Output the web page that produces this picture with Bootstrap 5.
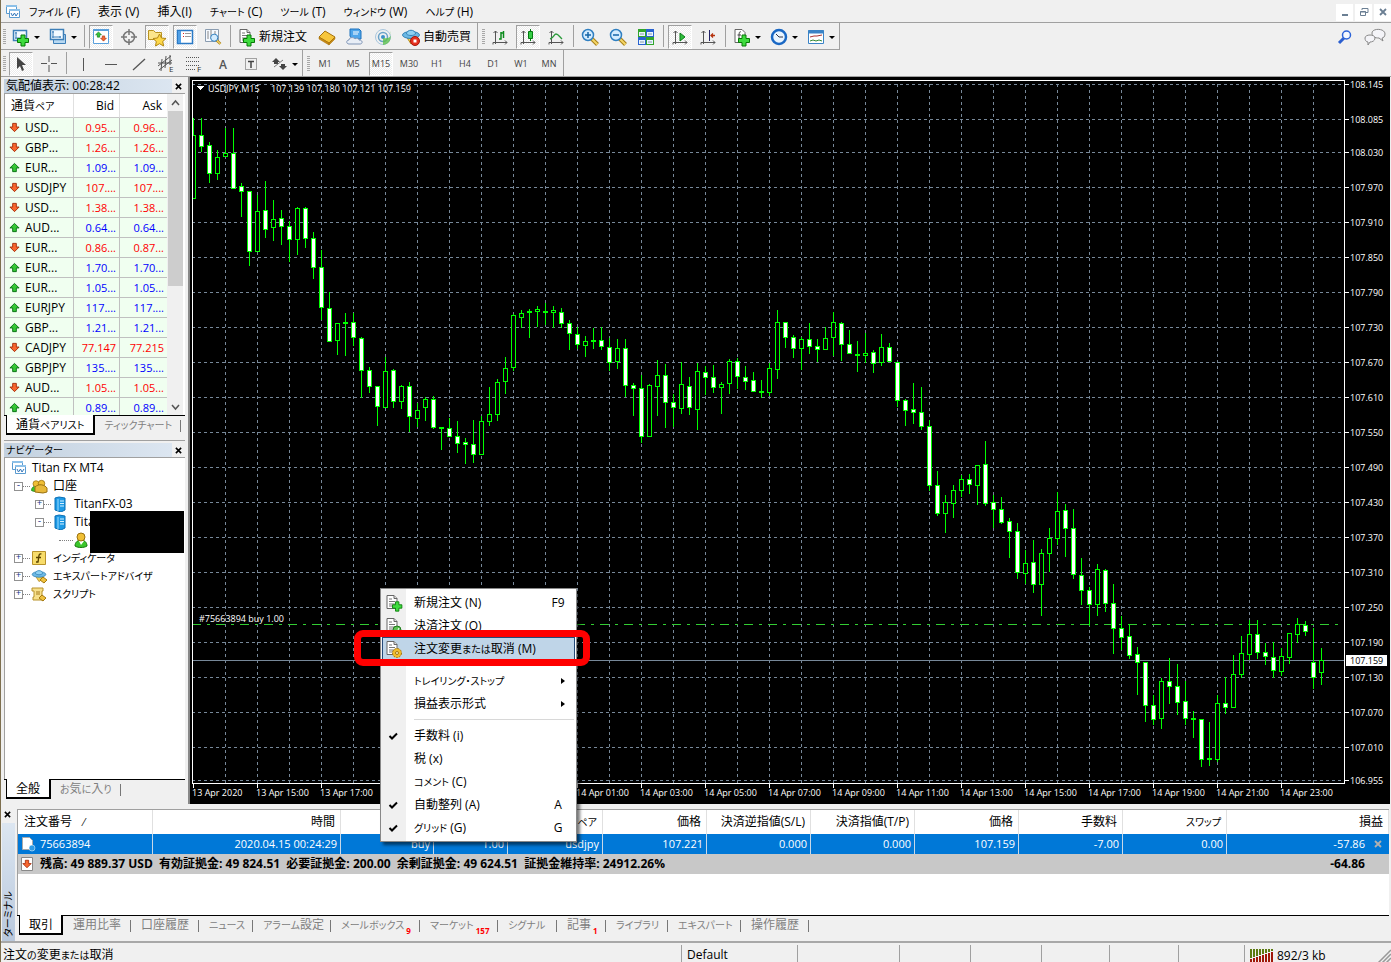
<!DOCTYPE html>
<html lang="ja">
<head>
<meta charset="utf-8">
<meta name="viewport" content="width=device-width, initial-scale=1">
<title>Titan FX MT4</title>
<link href="https://cdn.jsdelivr.net/npm/bootstrap@5.3.0/dist/css/bootstrap.min.css" rel="stylesheet">
<style>
body{height:100vh;overflow:hidden;background:#f0f0f0;color:#000;font:12px/18px "Open Sans","Noto Sans CJK JP",sans-serif;font-feature-settings:"palt";border-left:1px solid #7d6f4f}
button,input{font:inherit;color:inherit}
button{background:none;border:0;padding:0}
svg{display:block;flex:none}
.kn{font-size:10px}
.menubar{height:23px;border-bottom:1px solid #a0a0a0;padding:2px 0 0 4px;gap:18px}
.menubar .appicon{margin-right:-10px}
.winbtn{width:17px;height:17px;background:#fff;margin-left:2px;display:grid;place-items:center}
.tools{height:27px}
.band{border-right:1px solid #a0a0a0;border-bottom:1px solid #a0a0a0;height:27px;padding-top:2px}
.tools.second{border-bottom:1px solid #a0a0a0}
.tools.second .band{border-bottom:0;height:26px}
.grip{width:3px;margin:4px 1px 4px 2px;background:repeating-linear-gradient(#a8a8a8 0 1px,#f0f0f0 1px 2px)}
.band+.band .grip{margin-left:4px}
.tb{width:28px;display:flex;align-items:center;justify-content:center;font-size:9px;color:#444}
.tb.wide{width:auto;padding:0 6px 0 4px;gap:2px;font-size:12px;color:#000}
.tb.drop{width:37px;gap:3px;padding-left:4px;justify-content:flex-start}
.tb.on{width:24px;margin:0 2px;background:repeating-conic-gradient(#fff 0 25%,#ececec 0 50%) 0 0/2px 2px;border:1px solid #fff;border-top-color:#a0a0a0;border-left-color:#a0a0a0}
.drop::after{content:"";border:3px solid transparent;border-top-color:#000;border-bottom:0}
.vsep{width:1px;background:#a0a0a0;margin:0 2px 2px 3px}
.side{width:189px;border-right:2px solid #888;padding:2px 3px 0 3px}
.market{height:361px;flex:none}
.navi{border-top:1px solid #a0a0a0;padding-top:2px}
.ptitle{height:14px;line-height:14px;padding-right:2px}
.ptitle>span{background:linear-gradient(90deg,#c3d1df,#dce6f1);width:168px;padding-left:2px}
.closex{font-weight:700;width:10px;height:10px;display:grid;place-items:center}
.sheet{background:#fff;border-top:1px solid #a0a0a0;border-left:1px solid #a0a0a0}
.quotes{table-layout:fixed;width:162px;border-collapse:separate;border-spacing:0}
.quotes th{height:24px;font-weight:400;padding:0 5px 0 6px;border-bottom:1px solid #c8c8c8;border-right:1px solid #e0e0e0}
.quotes td{height:20px;line-height:19px;padding:0 3px 0 0;background:#f0fff0;border-bottom:1px solid #c0c0c0;border-right:1px solid #c0c0c0;white-space:nowrap}
.quotes td+td{font-size:11px;text-align:right}
.quotes td svg{margin:0 5px 0 4px}
.quotes th:last-child,.quotes td:last-child{border-right:0}
.up td+td{color:#00f}.down td+td{color:#f00}
.sbar{width:16px;background:#f0f0f0}
.thumb{height:175px;background:#cdcdcd;width:15px}
.tabline{border-top:1px solid #000;height:25px;color:#808080}
.tabline button{height:18px;line-height:18px;padding:0 9px;white-space:nowrap;position:relative}
.tabline button:not(.cur)::after{content:"";position:absolute;right:0;top:4px;height:12px;border-right:1px solid #777}
.tabline .cur{background:#fff;color:#000;height:20px;line-height:20px;margin-top:-1px;margin-left:2px;border:1px solid #000;border-width:0 2px 2px 1px}
.tree{margin:0;padding:1px 0 0 6px;list-style:none}
.tree li{height:18px;display:flex;align-items:center;white-space:nowrap}
.tree svg{margin-right:5px}
.lv1{padding-left:3px}.lv2{padding-left:24px}.lv3{padding-left:48px}
.pm{width:9px;height:9px;border:1px solid #919191;background:#fff;display:grid;place-items:center;font:9px/7px "Liberation Mono",monospace;color:#1c3c8c}
.dots{width:7px;border-top:1px dotted #808080}
.dots.long{width:14px}
.redact{position:absolute;left:89px;top:434px;width:94px;height:42px;background:#000}
.chart{background:#000;margin-right:1px;min-width:0}
.chart text{font:9px "Open Sans",sans-serif;fill:#fff}
.terminal{height:137px;padding:5px 2px 0 1px}
.tstrip{width:15px;flex:none}
.tname{background:linear-gradient(#b9c8dc,#dce6f1);writing-mode:vertical-rl;text-orientation:sideways;transform:rotate(180deg);line-height:13px;width:13px;padding-top:4px}
.orders{table-layout:fixed;width:100%;border-collapse:separate;border-spacing:0;white-space:nowrap}
.orders th{height:24px;font-weight:400;text-align:right;padding:0 5px 0 0;border-right:1px solid #e0e0e0}
.orders th:first-child{text-align:left;padding-left:6px}
.orders td{height:20px;line-height:18px;padding:0 3px 1px 0;text-align:right;border-right:1px solid #c8d8e8;background:#0078d7;color:#fff;font-size:11px}
.orders .sum td{background:#c8c8c8;color:#000;font-weight:700;font-size:12px;border:0}
.orders td:first-child{text-align:left;padding-left:3px}
.orders td:last-child{padding-right:24px;position:relative;border:0}
.orders td:last-child button{position:absolute;right:7px;top:6px}
.ttabs{display:grid;grid-template-columns:46px 68px 68px 54px 78px 89px 78px 59px 49px 62px 73px 68px;justify-content:start;align-items:start;height:26px}
.ttabs button{padding:0 0 0 10px;text-align:left}
.ttabs .cur{padding-left:9px;margin-right:0}
.cnt{color:#f00;font-size:8px;font-weight:700;position:relative;top:5px;margin-left:2px}
.status{height:21px;border-top:2px solid #a8a8a8;display:grid;grid-template-columns:1fr 116px 102px 71px 71px 68px 69px 66px 147px;line-height:20px}
.status div{padding:1px 0 0 5px;margin-top:2px;line-height:17px;border-left:1px solid #a0a0a0;white-space:nowrap}
.status div:first-child{border:0;padding-left:2px}
.ctx{display:block;position:absolute;left:379px;top:588px;width:197px;min-width:0;padding:2px 1px;border:1px solid #888;border-radius:0;background:linear-gradient(90deg,#f0f0f0 25px,#fff 25px);box-shadow:3px 3px 3px #0008;font-size:12px;color:#000}
.ctx button{display:flex;align-items:center;width:100%;height:23px;text-align:left;padding:0 8px 0 0;border:1px solid transparent}
.ctx i{width:31px;padding-left:1px;display:flex}
.ctx button>span{flex:1}
.ctx kbd{background:none;color:#000;font:inherit;padding:0;width:16px;text-align:center}
.ctx .hot{background:#bfd5e8;border-color:#244a78}
.ctx hr{margin:4px 1px 4px 32px;height:1px;border:0;background:#d8d8d8;opacity:1}
.ring{position:absolute;z-index:1001;left:353px;top:630px;width:236px;height:36px;border:7px solid #f00;border-radius:9px;pointer-events:none}
</style>
</head>
<body class="d-flex flex-column position-relative">
<svg width="0" height="0" class="position-absolute">
 <symbol id="doc" viewBox="0 0 20 20"><path d="M3 2.500h7l3 3v10H3z" fill="#fff" stroke="#666"/><path d="M10 2.500v3h3" fill="#ddd" stroke="#666"/><path d="M5 6h3M5 8.500h6M5 11h6M5 13h4" stroke="#777"/></symbol>
 <symbol id="plus" viewBox="0 0 20 20"><path d="M10 8h4v3.500h3.500v4H14V19h-4v-3.500H6.500v-4H10z" fill="#3edb3e" stroke="#067806"/></symbol>
 <symbol id="win" viewBox="0 0 20 20"><path d="M2.500 3.500h13v10h-13z" fill="#f4faff" stroke="#3d7fb8" stroke-width="1.500"/><path d="M5 5v7M4 6h2M4 11h9M12 10v2" stroke="#3d7fb8" fill="none"/></symbol>
 <symbol id="app" viewBox="0 0 16 16"><path d="M1.500 1.500h10v8h-10z" fill="#fff" stroke="#5a9bd0"/><path d="M1 1h11v2H1z" fill="#8cc0e8"/><path d="M4.500 5.500h10v8h-10z" fill="#fff" stroke="#5a9bd0"/><path d="M4 5h11v2H4z" fill="#8cc0e8"/><path d="M6 9l1.500 3 2-3 1.500 3 2-3" fill="none" stroke="#3377bb"/></symbol>
 <symbol id="aup" viewBox="0 0 12 12"><path d="M6 1.500l5 5H8v4H4v-4H1z" fill="#35c735" stroke="#056c13"/></symbol>
 <symbol id="adn" viewBox="0 0 12 12"><path d="M6 10.500l5-5H8v-4H4v4H1z" fill="#f8672f" stroke="#a32a08"/></symbol>
 <symbol id="axes" viewBox="0 0 20 20"><path d="M5.500 4v13M3 15.500h14M3.500 6l2-2 2 2M15 13.500l2 2-2 2M3 15.500v2" fill="none" stroke="#555"/></symbol>
 <symbol id="lens" viewBox="0 0 20 20"><path d="M11.500 11.500l6 6" stroke="#a8801a" stroke-width="4"/><path d="M11.500 11.500l6 6" stroke="#f5d667" stroke-width="2"/><circle cx="8" cy="8" r="5.500" fill="#d4ecff" stroke="#2f7fc1" stroke-width="1.500"/></symbol>
 <symbol id="hat" viewBox="0 0 20 20"><path d="M5 9l5 8 6-5z" fill="#f3cf57" stroke="#b58a1c"/><ellipse cx="10" cy="8" rx="8.500" ry="3.500" fill="#6cb8e4" stroke="#3484b8"/><path d="M5.500 7c0-5 9-5 9 0-2 2-7 2-9 0z" fill="#8fd0f2" stroke="#3484b8"/></symbol>
 <symbol id="man" viewBox="0 0 16 16"><path d="M2 14c0-8 12-8 12 0-3 2-9 2-12 0z" fill="#3bc62c" stroke="#16780d"/><path d="M6 9l2 4 3-4z" fill="#fff"/><circle cx="8" cy="5" r="4" fill="#f0bf35" stroke="#9a7110"/></symbol>
 <symbol id="server" viewBox="0 0 14 16"><path d="M2 2l4-1 6 1v12l-4 2-6-2z" fill="#1d9ae6" stroke="#0a6fb5"/><path d="M5 3v12" stroke="#9cdcff"/><path d="M7 5h4M7 7.500h4M7 10h4" stroke="#d6f1ff"/></symbol>
 <symbol id="tick" viewBox="0 0 10 10"><path d="M1.500 5L4 7.500 9 2.500" fill="none" stroke="#000" stroke-width="2"/></symbol>
 <symbol id="xx" viewBox="0 0 8 8"><path d="M1 1l6 6M7 1L1 7" stroke="currentColor" stroke-width="1.800"/></symbol>
</svg>

<nav class="menubar d-flex align-items-center" aria-label="メニュー">
 <svg class="appicon" width="16" height="16"><use href="#app"/></svg>
 <button><span class="kn">ファイル</span> (F)</button><button>表示 (V)</button><button>挿入(I)</button><button><span class="kn">チャート</span> (C)</button><button><span class="kn">ツール</span> (T)</button><button><span class="kn">ウィンドウ</span> (W)</button><button><span class="kn">ヘルプ</span> (H)</button>
 <div class="d-flex ms-auto">
  <button class="winbtn" aria-label="最小化"><svg width="10" height="10"><path d="M2 8h6" stroke="#6b7f93" stroke-width="2"/></svg></button>
  <button class="winbtn" aria-label="元に戻す"><svg width="10" height="10" fill="none" stroke="#6b7f93"><path d="M3 3V1.500h6v4H7M3 1.500h6"/><path d="M1.500 4.500h5v4h-5zM1 5h6"/></svg></button>
  <button class="winbtn" aria-label="閉じる"><svg width="8" height="8" color="#6b7f93"><use href="#xx"/></svg></button>
 </div>
</nav>

<div class="tools d-flex">
 <div class="band d-flex"><div class="grip"></div>
  <button class="tb drop" aria-label="新規チャート"><svg width="20" height="20"><use href="#win"/><use href="#plus"/></svg></button>
  <button class="tb drop" aria-label="プロファイル"><svg width="20" height="20"><path d="M5.500 7.500h12v9h-12z" fill="#b9d9f2" stroke="#3d7fb8"/><use href="#win" y="-1"/></svg></button>
  <div class="vsep"></div>
  <button class="tb on" aria-label="気配値表示"><svg width="20" height="20"><path d="M2.500 2.500h15v14h-15z" fill="#fff" stroke="#5aa0dc"/><path d="M2 3h16" stroke="#5aa0dc" stroke-width="2"/><use href="#aup" x="4" y="4" width="7" height="7"/><use href="#adn" x="9" y="8" width="7" height="7"/></svg></button>
  <button class="tb" aria-label="データウィンドウ"><svg width="20" height="20" fill="none" stroke="#777" stroke-width="1.500"><circle cx="10" cy="10" r="5.500"/><path d="M10 2v6M10 12v6M2 10h6M12 10h6"/></svg></button>
  <button class="tb on" aria-label="ナビゲーター"><svg width="20" height="20"><path d="M1.500 3.500h5l2 2h6v7h-13z" fill="#fbe58c" stroke="#b9931f"/><path d="M12.500 7l2 4 4.500.5-3.300 3 1 4.500-4.200-2.300L8.500 19l.8-4.500-3.300-3 4.500-.5z" fill="#fdd84b" stroke="#b38710"/></svg></button>
  <button class="tb on" aria-label="ターミナル"><svg width="20" height="20"><path d="M2.500 3.500h15v13h-15z" fill="#fff" stroke="#2a7ac6" stroke-width="1.500"/><path d="M3 4h3v12H3z" fill="#4f9fe6"/><path d="M8 6.500h1M8 9.500h1" stroke="#d22"/><path d="M10 6.500h6M10 9.500h6" stroke="#999"/></svg></button>
  <button class="tb" aria-label="ストラテジーテスター"><svg width="20" height="20"><path d="M2.500 2.500h13v12h-13z" fill="#f5f9ff" stroke="#8a9cb0"/><path d="M5 4v8M8 3v9M12 4v8" stroke="#888"/><use href="#lens" x="6" y="5" width="13" height="14"/></svg></button>
  <div class="vsep"></div>
  <button class="tb wide"><svg width="20" height="20"><use href="#doc"/><use href="#plus"/></svg>新規注文</button>
  <button class="tb" aria-label="メタエディター"><svg width="20" height="20"><path d="M2 10l6-6 10 6-6 6z" fill="#f7c63c" stroke="#a5720d"/><path d="M2 10v2l10 6v-2zM12 16l6-6v2l-6 6z" fill="#c98a13" stroke="#a5720d" stroke-width=".5"/></svg></button>
  <button class="tb" aria-label="クラウド"><svg width="20" height="20"><path d="M5 2h9l2 2v8H7L5 9z" fill="#4ea5ea" stroke="#1f73bd"/><path d="M8 5h6M8 7h5" stroke="#fff"/><path d="M4 17c-3 0-3-4 0-4 0-3 5-3 6-1 2-2 4 0 4 1 4 0 4 4 1 4z" fill="#e8eef6" stroke="#7f94b5"/></svg></button>
  <button class="tb" aria-label="シグナル"><svg width="20" height="20" fill="none"><circle cx="10" cy="10" r="7.500" stroke="#a8c6dd"/><circle cx="10" cy="10" r="4.500" stroke="#6aa2c8" stroke-width="1.500"/><circle cx="10" cy="10" r="2" fill="#3b8fc9"/><path d="M10 18V11l1 0c6 1 8-2 6-7 2 8 0 13-7 14z" fill="#5cc04c" fill-opacity=".8"/></svg></button>
  <button class="tb wide"><svg width="20" height="20"><use href="#hat"/><circle cx="14" cy="14" r="4.500" fill="#e6301f" stroke="#a5150a"/><path d="M12.500 12.500h3v3h-3z" fill="#fff"/></svg>自動売買</button>
 </div>
 <div class="band d-flex"><div class="grip"></div>
  <button class="tb" aria-label="バーチャート"><svg width="20" height="20"><use href="#axes"/><path d="M9 12h2V5M13 6h-2M13.500 4v7" stroke="#0a8a1a" stroke-width="1.500" fill="none"/></svg></button>
  <button class="tb on" aria-label="ローソク足"><svg width="20" height="20"><use href="#axes"/><path d="M12.500 2v12" stroke="#067a12"/><path d="M10.500 4.500h4v7h-4z" fill="#36cf46" stroke="#067a12"/></svg></button>
  <button class="tb" aria-label="ラインチャート"><svg width="20" height="20"><use href="#axes"/><path d="M4 12c4-1 4-5 6-5s3 2 6 5" stroke="#2a9a3a" fill="none" stroke-width="1.300"/></svg></button>
  <div class="vsep"></div>
  <button class="tb" aria-label="拡大"><svg width="20" height="20"><use href="#lens"/><path d="M5 8h6M8 5v6" stroke="#1565a8" stroke-width="1.500"/></svg></button>
  <button class="tb" aria-label="縮小"><svg width="20" height="20"><use href="#lens"/><path d="M5 8h6" stroke="#1565a8" stroke-width="1.500"/></svg></button>
  <button class="tb" aria-label="整列"><svg width="20" height="20"><path d="M2 2h8v8H2z" fill="#31a52b"/><path d="M10 2h8v8h-8z" fill="#2862d0"/><path d="M2 10h8v8H2z" fill="#2862d0"/><path d="M10 10h8v8h-8z" fill="#31a52b"/><path d="M3 5h6v4H3zM11 5h6v4h-6zM3 13h6v4H3zM11 13h6v4h-6z" fill="#e8f4ff"/><path d="M4 7h4M12 7h4M4 15h4M12 15h4" stroke="#89a"/></svg></button>
  <div class="vsep"></div>
  <button class="tb on" aria-label="自動スクロール"><svg width="20" height="20"><use href="#axes"/><path d="M10 6l5 4-5 4z" fill="#2fbf3c" stroke="#0b7a17"/></svg></button>
  <button class="tb" aria-label="チャートシフト"><svg width="20" height="20"><use href="#axes"/><path d="M11.500 3v11" stroke="#226"/><path d="M17 8.500h-4M15 6.500l-2 2 2 2" stroke="#b5320d" stroke-width="1.300" fill="none"/></svg></button>
  <div class="vsep"></div>
  <button class="tb drop" aria-label="インディケータ"><svg width="20" height="20"><path d="M3 2.500h7l3 3v10H3z" fill="#fff" stroke="#666"/><path d="M9 5c-2-1-2 1-2 8M5.500 8h3.500" fill="none" stroke="#444"/><use href="#plus"/></svg></button>
  <button class="tb drop" aria-label="時間足"><svg width="20" height="20"><circle cx="10" cy="10" r="7" fill="#eaf5ff" stroke="#1a68c4" stroke-width="2.500"/><path d="M7 7l3 3h4" fill="none" stroke="#334"/></svg></button>
  <button class="tb drop" aria-label="定型チャート"><svg width="20" height="20"><path d="M2.500 3.500h15v13h-15z" fill="#fff" stroke="#3a83c6"/><path d="M2 5h16" stroke="#3a83c6" stroke-width="3"/><path d="M4 10l4-1 3 0 5-1" stroke="#a33" fill="none"/><path d="M4 14l3-1 3 1 3-1 3 1" stroke="#383" fill="none"/></svg></button>
 </div>
 <div class="d-flex align-items-center ms-auto gap-1 pe-1">
  <button class="tb" aria-label="検索"><svg width="16" height="16"><path d="M7 9l-5 5" stroke="#2b5fd0" stroke-width="3"/><circle cx="9.500" cy="6" r="4" fill="#f4f8ff" stroke="#2b62d8" stroke-width="1.500"/></svg></button>
  <button aria-label="チャット"><svg width="24" height="18" fill="#f4f4f8" stroke="#888"><path d="M9 5c0-5 13-5 13 1 0 3-2 4-3 4l1 3-4-3c-4 0-7-1-7-5z"/><path d="M2 10c0-4 10-4 10 0 0 3-3 4-5 4l-2 3v-3c-2 0-3-2-3-4z"/></svg></button>
 </div>
</div>
<div class="tools second d-flex">
 <div class="band d-flex"><div class="grip"></div>
  <button class="tb on" aria-label="カーソル"><svg width="16" height="18"><path d="M4 2v12l3-3 2 5 2-1-2-5h4z" fill="#444"/></svg></button>
  <button class="tb" aria-label="十字カーソル"><svg width="18" height="18"><path d="M9 1v6M9 10v7M1 8.500h6M11 8.500h6" stroke="#555"/></svg></button>
  <div class="vsep"></div>
  <button class="tb" aria-label="垂直線"><svg width="16" height="16"><path d="M8.500 2v13" stroke="#555"/></svg></button>
  <button class="tb" aria-label="水平線"><svg width="16" height="16"><path d="M2 8.500h12" stroke="#555"/></svg></button>
  <button class="tb" aria-label="トレンドライン"><svg width="16" height="16"><path d="M2 14L14 3" stroke="#555" stroke-width="1.300"/></svg></button>
  <button class="tb" aria-label="チャネル"><svg width="20" height="20"><path d="M1 12L14 2M2 16L15 6M5 5L4 17M9 2L8 14M13 1v10M1 9h14" stroke="#555"/><text x="12" y="18" font-size="8" fill="#333">E</text></svg></button>
  <button class="tb" aria-label="フィボナッチ"><svg width="20" height="20"><path d="M1 3.500h14M1 7.500h14M1 11.500h14M1 15.500h9" stroke="#555" stroke-dasharray="1 1"/><text x="12" y="18" font-size="8" fill="#333">F</text></svg></button>
  <button class="tb" aria-label="テキスト"><svg width="16" height="18"><text x="4" y="14" font-size="12" font-weight="600" fill="#555">A</text></svg></button>
  <button class="tb" aria-label="ラベル"><svg width="16" height="16"><path d="M2.500 2.500h11v11h-11z" fill="none" stroke="#555" stroke-dasharray="1 1"/><path d="M5 5.500h6M8 5v7" stroke="#444" stroke-width="1.500"/></svg></button>
  <button class="tb drop" aria-label="矢印"><svg width="20" height="18"><path d="M7 3l4 4H9v2H5V7H3zM14 15l-4-4h2V9h4v2h2z" fill="#444"/><path d="M5 12l9-7" stroke="#777"/></svg></button>
 </div>
 <div class="band d-flex"><div class="grip"></div>
  <button class="tb">M1</button><button class="tb">M5</button><button class="tb on">M15</button><button class="tb">M30</button><button class="tb">H1</button><button class="tb">H4</button><button class="tb">D1</button><button class="tb">W1</button><button class="tb">MN</button>
 </div>
</div>

<main class="d-flex flex-grow-1 overflow-hidden">
 <aside class="side d-flex flex-column flex-shrink-0 position-relative">
  <section class="market d-flex flex-column">
   <div class="ptitle d-flex justify-content-between align-items-center"><span>気配値表示: 00:28:42</span><button class="closex" aria-label="閉じる"><svg width="7" height="7"><use href="#xx"/></svg></button></div>
   <div class="sheet d-flex flex-grow-1 overflow-hidden">
    <div class="overflow-hidden"><table class="quotes"><colgroup><col style="width:69px"><col style="width:46px"><col></colgroup>
     <thead><tr><th>通貨<span class="kn">ペア</span></th><th class="text-end">Bid</th><th class="text-end">Ask</th></tr></thead><tbody id="quotes"></tbody></table></div>
    <div class="sbar d-flex flex-column align-items-center"><svg width="15" height="17"><path d="M4 11l3.500-4L11 11" fill="none" stroke="#555" stroke-width="1.500"/></svg><div class="thumb"></div><svg class="mt-auto" width="15" height="16"><path d="M4 6l3.500 4L11 6" fill="none" stroke="#555" stroke-width="1.500"/></svg></div>
   </div>
   <div class="tabline d-flex"><button class="cur">通貨<span class="kn">ペアリスト</span></button><button class="kn">ティックチャート</button></div>
  </section>
  <section class="navi d-flex flex-column flex-grow-1">
   <div class="ptitle d-flex justify-content-between align-items-center"><span class="kn">ナビゲーター</span><button class="closex" aria-label="閉じる"><svg width="7" height="7"><use href="#xx"/></svg></button></div>
   <div class="sheet flex-grow-1">
    <ul class="tree">
     <li><svg width="16" height="16"><use href="#app"/></svg>Titan FX MT4</li>
     <li class="lv1"><b class="pm">-</b><b class="dots"></b><svg width="18" height="16"><use href="#man" x="0" width="12" height="16"/><use href="#man" x="5" width="13" height="16"/><path d="M5 9c4-4 10-2 12 1v4l-4 1-8-1z" fill="#e8b93a" stroke="#9a7110"/></svg>口座</li>
     <li class="lv2"><b class="pm">+</b><b class="dots"></b><svg width="18" height="16"><use href="#server"/></svg>TitanFX-03</li>
     <li class="lv2"><b class="pm">-</b><b class="dots"></b><svg width="18" height="16"><use href="#server"/></svg>Tita</li>
     <li class="lv3"><b class="dots long"></b><svg width="16" height="16"><use href="#man"/></svg></li>
     <li class="lv1"><b class="pm">+</b><b class="dots"></b><svg width="18" height="16"><path d="M2.500 1.500h13v13h-13z" fill="#f7dc6a" stroke="#b8922a"/><path d="M11.500 4C8 3 9 8 8 12H6M6 7.500h5" fill="none" stroke="#5a4300" stroke-width="1.300"/></svg><span class="kn">インディケータ</span></li>
     <li class="lv1"><b class="pm">+</b><b class="dots"></b><svg width="18" height="16"><use href="#hat"/><path d="M10 12l3-3 4 3-3 3z" fill="#f0c23e" stroke="#a5790f"/></svg><span class="kn">エキスパートアドバイザ</span></li>
     <li class="lv1"><b class="pm">+</b><b class="dots"></b><svg width="18" height="16"><path d="M2 2h11v3h-1v6h2v3H3v-3h1V5H2z" fill="#f7e08a" stroke="#b8922a"/><path d="M6 6h4M6 8h4" stroke="#a57a1c"/><path d="M9 12l3-3 4 3-3 3z" fill="#f0c23e" stroke="#a5790f"/></svg><span class="kn">スクリプト</span></li>
    </ul>
   </div>
   <div class="tabline d-flex"><button class="cur">全般</button><button><span class="kn">お</span>気<span class="kn">に</span>入<span class="kn">り</span></button></div>
  </section>
  <div class="redact"></div>
 </aside>
 <div class="chart flex-grow-1 overflow-hidden"><svg id="chart" width="100%" height="100%" role="img" aria-label="USDJPY,M15"></svg></div>
</main>

<section class="terminal d-flex">
 <div class="tstrip d-flex flex-column"><button class="closex mb-1 flex-shrink-0" aria-label="閉じる"><svg width="7" height="7"><use href="#xx"/></svg></button><div class="tname kn flex-grow-1">ターミナル</div></div>
 <div class="d-flex flex-column flex-grow-1">
  <div class="sheet flex-grow-1">
   <table class="orders"><colgroup><col style="width:135px"><col style="width:188px"><col style="width:93px"><col style="width:74px"><col style="width:95px"><col style="width:104px"><col style="width:104px"><col style="width:104px"><col style="width:104px"><col style="width:104px"><col style="width:104px"><col></colgroup>
    <thead><tr><th>注文番号 <small class="ms-2">⁄</small></th><th>時間</th><th class="kn">タイプ</th><th>数量</th><th>通貨<span class="kn">ペア</span></th><th>価格</th><th>決済逆指値(S/L)</th><th>決済指値(T/P)</th><th>価格</th><th>手数料</th><th class="kn">スワップ</th><th>損益</th></tr></thead>
    <tbody><tr><td><span class="d-flex align-items-center"><svg class="me-1" width="15" height="16"><path d="M1.500 1.500h7l3 3v9h-10z" fill="#fff" stroke="#aaa"/><circle cx="11" cy="12" r="3" fill="#2d9be6" stroke="#fff" stroke-width=".5"/></svg>75663894</span></td><td>2020.04.15 00:24:29</td><td>buy</td><td>1.00</td><td>usdjpy</td><td>107.221</td><td>0.000</td><td>0.000</td><td>107.159</td><td>-7.00</td><td>0.00</td><td>-57.86<button aria-label="決済"><svg width="8" height="8" color="#b0b0b0"><use href="#xx"/></svg></button></td></tr>
    <tr class="sum"><td colspan="11"><span class="d-flex align-items-center"><svg class="me-1" width="15" height="16"><path d="M.500 1.500h11v13H.500z" fill="#fff" stroke="#888"/><use href="#adn" x="1" y="3" width="10" height="10"/></svg><span style="white-space:pre">残高: 49 889.37 USD  有効証拠金: 49 824.51  必要証拠金: 200.00  余剰証拠金: 49 624.51  証拠金維持率: 24912.26%</span></span></td><td>-64.86</td></tr></tbody>
   </table>
  </div>
  <div class="tabline ttabs"><button class="cur">取引</button><button>運用比率</button><button>口座履歴</button><button class="kn">ニュース</button><button><span class="kn">アラーム</span>設定</button><button class="kn">メールボックス<span class="cnt">9</span></button><button class="kn">マーケット<span class="cnt">157</span></button><button class="kn">シグナル</button><button>記事<span class="cnt">1</span></button><button class="kn">ライブラリ</button><button class="kn">エキスパート</button><button>操作履歴</button></div>
 </div>
</section>

<footer class="status"><div>注文<span class="kn">の</span>変更<span class="kn">または</span>取消</div><div>Default</div><div></div><div></div><div></div><div></div><div></div><div></div><div class="d-flex align-items-center"><svg id="traffic" class="me-1" width="23" height="14"></svg>892/3 kb<svg class="ms-auto" width="16" height="16"><path d="M3 16L16 3M7 16l9-9M11 16l5-5" stroke="#999" stroke-width="1.500"/></svg></div></footer>

<div class="ctx dropdown-menu show">
 <button><i><svg width="20" height="20"><use href="#doc"/><use href="#plus" x="3" y="2" width="17" height="17"/></svg></i><span>新規注文 (N)</span><kbd>F9</kbd></button>
 <button><i><svg width="20" height="20"><use href="#doc"/><circle cx="13" cy="14" r="4" fill="#5cc050" stroke="#1e7a1a"/><path d="M11 14l2 2 2-4" stroke="#fff" fill="none"/></svg></i><span>決済注文 (O)</span></button>
 <button class="hot"><i><svg width="20" height="20"><use href="#doc"/><circle cx="13" cy="14" r="4.500" fill="#f1bd2c" stroke="#a5760b" stroke-dasharray="2 1"/><circle cx="13" cy="14" r="1.500" fill="#fff3c0" stroke="#a5760b"/></svg></i><span>注文変更<span class="kn">または</span>取消 (M)</span></button>
 <hr>
 <button><i></i><span class="kn">トレイリング・ストップ</span><svg width="6" height="6"><path d="M1 0l4 3-4 3z"/></svg></button>
 <button><i></i><span>損益表示形式</span><svg width="6" height="6"><path d="M1 0l4 3-4 3z"/></svg></button>
 <hr>
 <button><i><svg class="ms-1" width="10" height="10"><use href="#tick"/></svg></i><span>手数料 (i)</span></button>
 <button><i></i><span>税 (x)</span></button>
 <button><i></i><span><span class="kn">コメント</span> (C)</span></button>
 <button><i><svg class="ms-1" width="10" height="10"><use href="#tick"/></svg></i><span>自動整列 (A)</span><kbd>A</kbd></button>
 <button><i><svg class="ms-1" width="10" height="10"><use href="#tick"/></svg></i><span><span class="kn">グリッド</span> (G)</span><kbd>G</kbd></button>
</div>
<div class="ring"></div>

<script src="https://cdn.jsdelivr.net/npm/bootstrap@5.3.0/dist/js/bootstrap.bundle.min.js"></script>
<script>
const quotes = [['d','USD...','0.95...','0.96...'],['d','GBP...','1.26...','1.26...'],['u','EUR...','1.09...','1.09...'],['d','USDJPY','107....','107....'],['d','USD...','1.38...','1.38...'],['u','AUD...','0.64...','0.64...'],['d','EUR...','0.86...','0.87...'],['u','EUR...','1.70...','1.70...'],['u','EUR...','1.05...','1.05...'],['u','EURJPY','117....','117....'],['u','GBP...','1.21...','1.21...'],['d','CADJPY','77.147','77.215'],['u','GBPJPY','135....','135....'],['d','AUD...','1.05...','1.05...'],['u','AUD...','0.89...','0.89...']];
document.getElementById('quotes').innerHTML = quotes.map(q => `<tr class="${q[0]=='u'?'up':'down'}"><td><span class="d-flex align-items-center"><svg width="11" height="11"><use href="#${q[0]=='u'?'aup':'adn'}"/></svg>${q[1]}</span></td><td>${q[2]}</td><td>${q[3]}</td></tr>`).join('');

// one candle per 15 minutes: high, body top, body bottom, low, f(alling) or r(ising)
const candles = `118 135 198 198 r,118 135 146 151 f,142 145 173 182 f,150 157 173 179 r,128 153 156 156 r,128 153 188 188 f,183 186 191 216 f,191 191 251 265 f,195 211 251 251 r,181 210 229 237 f,200 219 227 240 r,210 218 226 244 f,221 226 239 261 f,207 208 239 254 r,207 208 238 247 f,232 238 267 278 f,250 267 307 319 f,292 308 341 341 f,323 323 340 354 r,313 322 323 355 r,313 322 337 345 f,337 338 370 397 f,367 370 386 392 f,386 386 406 425 f,357 371 407 407 r,369 370 401 407 f,385 386 401 408 r,382 386 416 431 f,403 410 418 426 r,397 399 407 420 r,396 399 427 428 f,427 427 428 449 r,418 428 436 436 f,421 436 443 452 f,438 442 444 463 f,420 444 454 462 f,416 421 454 454 r,387 414 421 425 r,379 382 414 420 r,357 368 381 393 r,314 315 367 370 r,310 313 317 327 r,309 311 312 337 r,306 309 311 326 r,303 311 312 324 r,306 310 312 327 r,308 312 323 327 f,320 323 333 349 f,327 334 344 348 f,336 341 345 356 r,328 340 341 348 r,327 340 346 349 f,338 347 362 370 f,339 348 361 368 r,339 348 385 396 f,383 385 388 415 f,375 388 436 442 f,384 385 436 436 r,360 375 386 415 r,364 375 402 427 f,394 402 407 426 f,362 384 408 413 r,377 386 407 414 f,363 371 409 429 r,366 372 377 394 f,365 377 387 392 f,382 384 387 413 r,359 361 383 393 r,358 361 376 388 f,366 377 381 389 f,372 380 391 391 f,380 391 392 397 r,363 368 392 395 r,310 322 369 378 r,322 322 337 347 f,335 337 348 357 f,337 339 348 369 r,323 339 346 353 f,339 346 349 361 f,327 338 349 349 r,312 322 337 355 r,322 323 344 360 f,330 344 353 353 f,341 354 355 371 r,333 353 355 362 r,350 352 363 372 f,334 347 362 365 r,343 347 361 361 f,362 362 400 406 f,399 400 410 425 f,383 409 412 423 f,387 412 426 429 f,420 426 485 490 f,471 485 513 515 f,495 502 513 532 r,485 490 503 517 r,475 479 490 496 r,474 479 484 493 f,465 465 485 504 r,441 464 503 505 f,495 502 509 527 f,497 509 522 523 f,518 521 531 557 f,523 531 572 578 f,550 563 573 583 r,540 562 584 592 f,549 553 584 615 r,528 538 553 571 r,492 511 538 544 r,504 510 528 556 f,509 528 574 578 f,558 575 590 604 f,587 590 604 625 f,564 569 604 615 r,569 570 603 611 f,584 603 628 653 f,616 628 637 649 f,624 636 655 658 f,647 654 662 694 f,662 662 705 721 f,695 705 719 724 f,678 681 718 728 r,658 681 686 703 f,664 686 702 714 f,681 701 718 724 f,711 718 719 737 r,719 719 759 766 f,722 758 759 765 r,695 703 759 761 r,677 703 707 713 f,655 674 707 707 r,636 653 674 677 r,620 634 654 659 r,620 634 652 658 f,643 652 656 664 f,642 657 670 677 f,648 656 671 675 r,633 633 657 663 r,618 624 634 642 r,621 625 631 635 f,628 662 677 688 f,648 660 672 684 r`.split(',').map(s => s.split(' '));
const prices = [[84,'108.145'],[119,'108.085'],[152,'108.030'],[187,'107.970'],[222,'107.910'],[257,'107.850'],[292,'107.790'],[327,'107.730'],[362,'107.670'],[397,'107.610'],[432,'107.550'],[467,'107.490'],[502,'107.430'],[537,'107.370'],[572,'107.310'],[607,'107.250'],[642,'107.190'],[677,'107.130'],[712,'107.070'],[747,'107.010'],[780,'106.955']];
const svg = document.getElementById('chart');
function draw() {
  const w = svg.clientWidth, left = 1390 - w + 2, R = (x,y,a,b,c) => `<rect x="${x}" y="${y}" width="${a}" height="${b}" fill="${c}"/>`;
  let s = '';
  for (let x = 225; x < 1344; x += 32) s += `<path d="M${x+.5} 783V81" stroke="#778899" stroke-dasharray="3 3"/>`;
  for (const [y] of prices) s += `<path d="M${left} ${y+.5}H1344" stroke="#778899" stroke-dasharray="3 3"/>`;
  s += `<path d="M${left} 624.5H1341" stroke="#32cd32" stroke-dasharray="9 6 3 6"/>` + R(left,660,1344-left,1,'#778899');
  candles.forEach((c, i) => {
    const x = 193 + i*8, [h,t,b,l] = c.map(Number), n = b-t+1;
    if (x < left) return;
    s += R(x,h,1,l-h+1,'#0f0');
    const cut = i ? 2 : 0;
    s += R(x-cut,t,cut+3,n,'#0f0');
    if (n > 2) s += R(x-(cut?1:0),t+1,cut?3:2,n-2,c[4]=='f'?'#fff':'#000');
  });
  s += R(left,80,1345-left,1,'#fff') + R(left,783,1345-left,1,'#fff') + R(left,80,1,704,'#fff') + R(1344,80,1,704,'#fff');
  for (const [y,p] of prices) s += R(1345,y,4,1,'#fff') + `<text x="1350" y="${y+4}">${p}</text>`;
  for (let k = 0; k < 18; k++) {
    const hour = (13 + k*2) % 24, label = k ? `${k<6?13:14} Apr ${String(hour).padStart(2,'0')}:00` : '13 Apr 2020';
    s += R(193+k*64,784,1,4,'#fff') + `<text x="${192+k*64}" y="796">${label}</text>`;
  }
  s += R(1346,655,41,11,'#fff') + `<text x="1350" y="664" style="fill:#000">107.159</text>`;
  s += `<path d="M196 86h8l-4 4z" fill="#fff"/><text x="208" y="92">USDJPY,M15</text><text x="271" y="92">107.139 107.180 107.121 107.159</text><text x="199" y="622">#75663894 buy 1.00</text>`;
  svg.innerHTML = `<g shape-rendering="crispEdges" transform="translate(${w-1390},-77)">${s}</g>`;
}
draw();
addEventListener('resize', draw);
let bars = '';
for (let i = 0; i < 8; i++) bars += `<rect x="${i*3}" y="1" width="2" height="${9-i}" fill="#5b7a10"/><rect x="${i*3}" y="${11-i}" width="2" height="${3+i}" fill="#a01808"/>`;
document.getElementById('traffic').innerHTML = bars;
</script>
</body>
</html>
